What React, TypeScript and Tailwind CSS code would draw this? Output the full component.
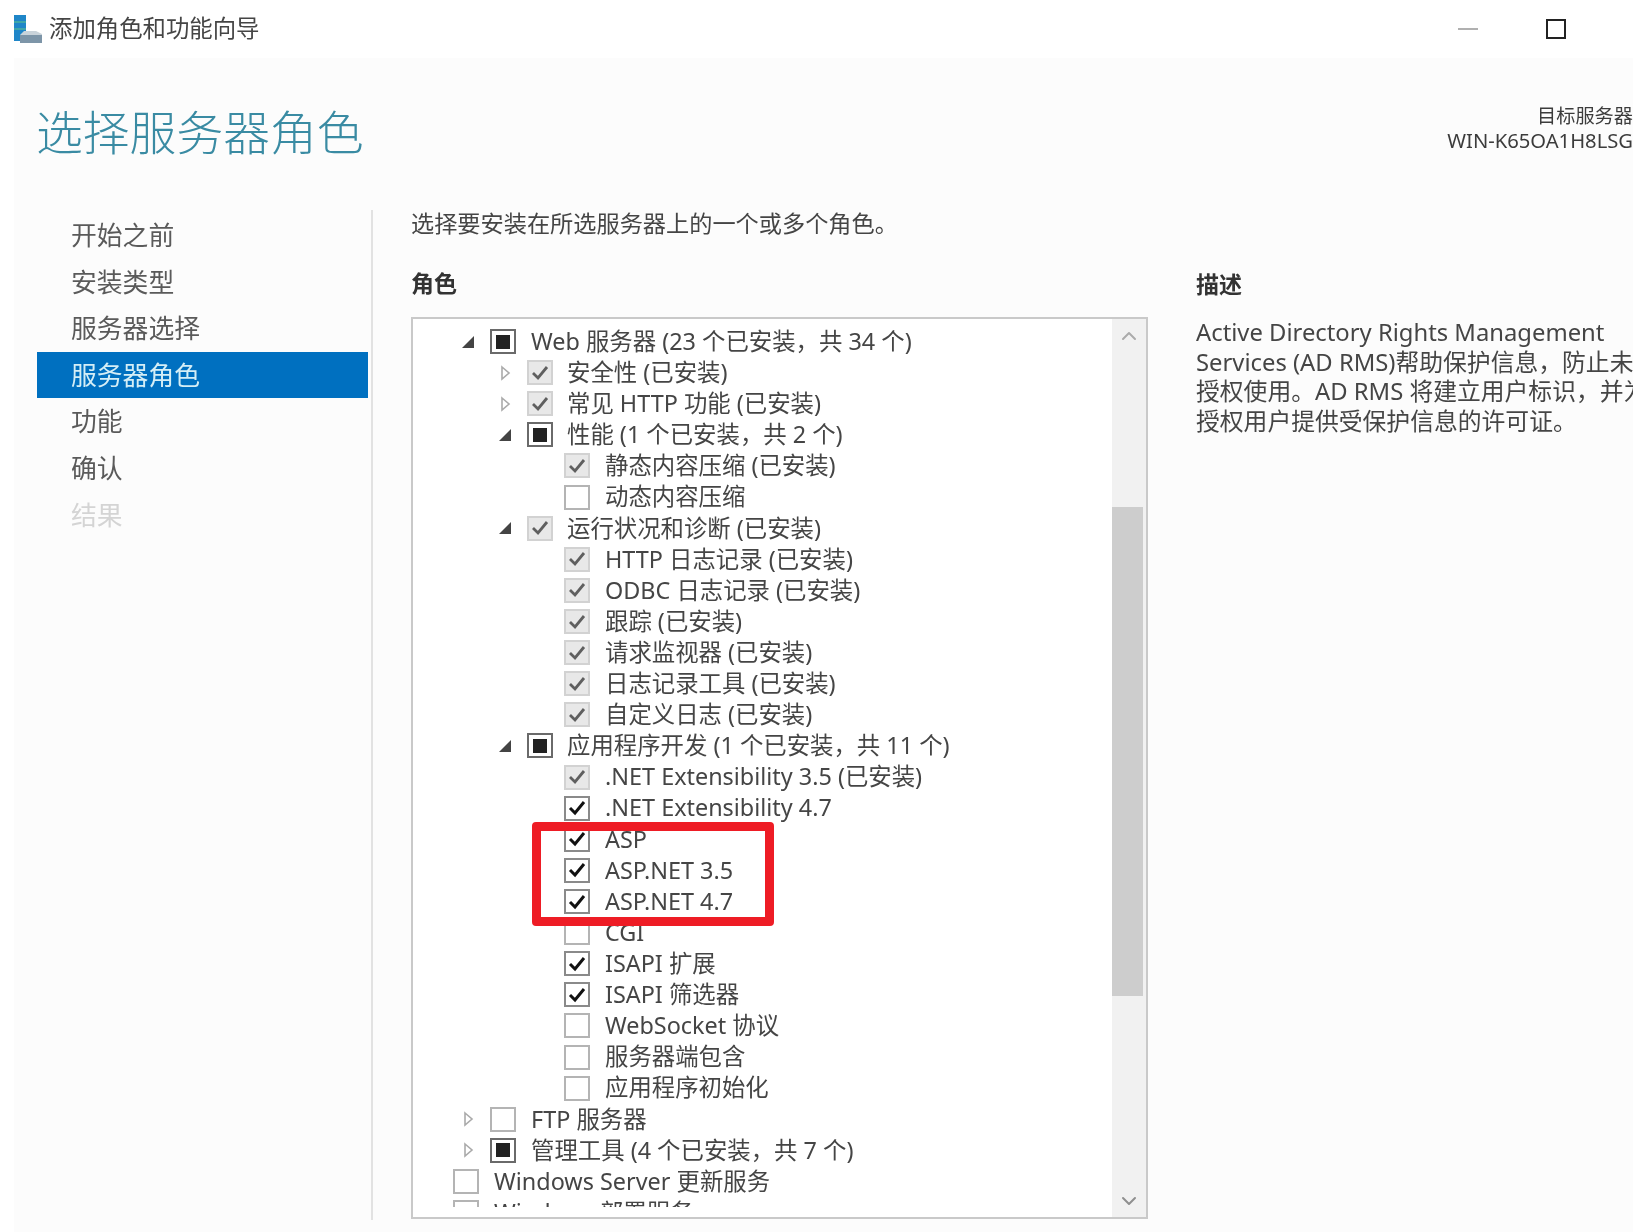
import { ChevronDown, ChevronUp } from "lucide-react";

type Check = "none" | "installed" | "mixed" | "checked";
type Arrow = "open" | "closed" | null;

interface Row {
  level: 0 | 1 | 2 | 3;
  arrow: Arrow;
  check: Check;
  label: string;
}

const steps = ["开始之前", "安装类型", "服务器选择", "服务器角色", "功能", "确认", "结果"];

const rows: Row[] = [
  { level: 1, arrow: "open", check: "mixed", label: "Web 服务器 (23 个已安装，共 34 个)" },
  { level: 2, arrow: "closed", check: "installed", label: "安全性 (已安装)" },
  { level: 2, arrow: "closed", check: "installed", label: "常见 HTTP 功能 (已安装)" },
  { level: 2, arrow: "open", check: "mixed", label: "性能 (1 个已安装，共 2 个)" },
  { level: 3, arrow: null, check: "installed", label: "静态内容压缩 (已安装)" },
  { level: 3, arrow: null, check: "none", label: "动态内容压缩" },
  { level: 2, arrow: "open", check: "installed", label: "运行状况和诊断 (已安装)" },
  { level: 3, arrow: null, check: "installed", label: "HTTP 日志记录 (已安装)" },
  { level: 3, arrow: null, check: "installed", label: "ODBC 日志记录 (已安装)" },
  { level: 3, arrow: null, check: "installed", label: "跟踪 (已安装)" },
  { level: 3, arrow: null, check: "installed", label: "请求监视器 (已安装)" },
  { level: 3, arrow: null, check: "installed", label: "日志记录工具 (已安装)" },
  { level: 3, arrow: null, check: "installed", label: "自定义日志 (已安装)" },
  { level: 2, arrow: "open", check: "mixed", label: "应用程序开发 (1 个已安装，共 11 个)" },
  { level: 3, arrow: null, check: "installed", label: ".NET Extensibility 3.5 (已安装)" },
  { level: 3, arrow: null, check: "checked", label: ".NET Extensibility 4.7" },
  { level: 3, arrow: null, check: "checked", label: "ASP" },
  { level: 3, arrow: null, check: "checked", label: "ASP.NET 3.5" },
  { level: 3, arrow: null, check: "checked", label: "ASP.NET 4.7" },
  { level: 3, arrow: null, check: "none", label: "CGI" },
  { level: 3, arrow: null, check: "checked", label: "ISAPI 扩展" },
  { level: 3, arrow: null, check: "checked", label: "ISAPI 筛选器" },
  { level: 3, arrow: null, check: "none", label: "WebSocket 协议" },
  { level: 3, arrow: null, check: "none", label: "服务器端包含" },
  { level: 3, arrow: null, check: "none", label: "应用程序初始化" },
  { level: 1, arrow: "closed", check: "none", label: "FTP 服务器" },
  { level: 1, arrow: "closed", check: "mixed", label: "管理工具 (4 个已安装，共 7 个)" },
  { level: 0, arrow: null, check: "none", label: "Windows Server 更新服务" },
  { level: 0, arrow: null, check: "none", label: "Windows 部署服务" },
];

const indent = ["w-[40px]", "w-[77px]", "w-[114px]", "w-[151px]"];
const labelGap = ["ml-[15px]", "ml-[15px]", "ml-[14px]", "ml-[15px]"];

function WizardIcon() {
  return (
    <svg width="28" height="28" viewBox="0 0 28 28" className="shrink-0">
      <rect x="0" y="0" width="12" height="26" fill="#1f86c8" />
      <rect x="0" y="6" width="12" height="2" fill="#3fa6a8" />
      <rect x="0" y="13" width="12" height="2" fill="#3fa6a8" />
      <path d="M6 26 L6 20 L10 16 L22 16 L28 19 L28 28 L6 28 Z" fill="#c9d3da" />
      <rect x="6" y="20" width="22" height="8" fill="#7d95a8" />
    </svg>
  );
}

function TreeArrow({ kind }: { kind: Arrow }) {
  if (kind === "open") {
    return (
      <svg width="14" height="14" viewBox="0 0 14 14">
        <polygon points="13,1 13,13 1,13" fill="#444" />
      </svg>
    );
  }
  if (kind === "closed") {
    return (
      <svg width="14" height="16" viewBox="0 0 14 16">
        <polygon points="4,2 11,8 4,14" fill="#fff" stroke="#aaa" strokeWidth="1.6" />
      </svg>
    );
  }
  return null;
}

function CheckBox({ state }: { state: Check }) {
  if (state === "mixed") {
    return (
      <span className="w-[26px] h-[25px] shrink-0 border-2 border-[#6a6a6a] bg-white flex items-center justify-center">
        <span className="w-[14px] h-[14px] bg-[#222]" />
      </span>
    );
  }
  if (state === "installed") {
    return (
      <span className="w-[26px] h-[25px] shrink-0 border-2 border-[#d2d2d2] bg-[#e8e8e8] flex items-center justify-center">
        <svg width="18" height="16" viewBox="0 0 18 16">
          <path d="M2 8 L7 13 L16 2" fill="none" stroke="#5f5f5f" strokeWidth="2.8" />
        </svg>
      </span>
    );
  }
  if (state === "checked") {
    return (
      <span className="w-[26px] h-[25px] shrink-0 border-2 border-[#8a8a8a] bg-white flex items-center justify-center">
        <svg width="18" height="16" viewBox="0 0 18 16">
          <path d="M2 8 L7 13 L16 2" fill="none" stroke="#111" strokeWidth="3" />
        </svg>
      </span>
    );
  }
  return <span className="w-[26px] h-[25px] shrink-0 border-2 border-[#b4b4b4] bg-white" />;
}

export default function App() {
  return (
    <div className="w-[1643px] h-[1232px] overflow-hidden bg-white text-[#454545] blur-[0.7px] font-['Noto_Sans','Noto_Sans_CJK_SC',sans-serif]">
      {/* Title bar */}
      <div className="h-[58px] flex items-center pl-[14px]">
        <WizardIcon />
        <span className="ml-[7px] text-[23.4px] leading-none">添加角色和功能向导</span>
        <div className="ml-auto flex items-center">
          <span className="w-[20px] h-[2px] bg-[#b0b0b0]" />
          <span className="ml-[68px] mr-[77px] w-[20px] h-[20px] border-[2px] border-[#222]" />
        </div>
      </div>

      <div className="relative ml-[14px] w-[1619px] h-[1174px] bg-[#fcfcfc] overflow-hidden">
        {/* Header */}
        <div className="h-[152px] flex justify-between">
          <h1 className="pl-[22px] pt-[43px] text-[46.8px] leading-[62px] font-light text-[#3a8ba3]">选择服务器角色</h1>
          <div className="pt-[46px] text-right text-[20.2px] leading-[24px] text-[#3c3c3c] whitespace-nowrap">
            <div className="text-[19.2px]">目标服务器</div>
            <div>WIN-K65OA1H8LSG</div>
          </div>
        </div>

        <div className="flex h-[1010px]">
          {/* Steps */}
          <nav className="w-[359px] shrink-0 border-r-2 border-[#e2e2e2] pt-[2px] pl-[23px] pr-[3px] text-[25.8px]">
            {steps.map((step) => (
              <div
                key={step}
                className={
                  step === "服务器角色"
                    ? "h-[46.6px] pl-[34px] flex items-center bg-[#0070c0] text-[#d4eef6]"
                    : step === "结果"
                      ? "h-[46.6px] pl-[34px] flex items-center text-[#d4d4d4]"
                      : "h-[46.6px] pl-[34px] flex items-center text-[#5a5a5a]"
                }
              >
                {step}
              </div>
            ))}
          </nav>

          {/* Roles */}
          <div className="pl-[38px] w-[776px] shrink-0">
            <p className="h-[26px] flex items-center text-[23.2px] whitespace-nowrap">选择要安装在所选服务器上的一个或多个角色。</p>
            <h2 className="mt-[33px] h-[28px] flex items-center text-[23px] font-bold text-[#333]">角色</h2>
            <div className="relative mt-[20px] w-[737px] h-[902px] border-2 border-[#c9c9c9] bg-white flex">
              <div className="flex-1 h-[888px] overflow-hidden pt-[7px]">
                {rows.map((row) => (
                  <div key={row.label} className="h-[31.12px] flex items-center">
                    <span className={`${indent[row.level]} shrink-0 flex justify-end pr-[15px]`}>
                      <TreeArrow kind={row.arrow} />
                    </span>
                    <CheckBox state={row.check} />
                    <span className={`${labelGap[row.level]} text-[23.4px] leading-none whitespace-nowrap`}>{row.label}</span>
                  </div>
                ))}
              </div>
              {/* Scrollbar */}
              <div className="w-[34px] shrink-0 bg-[#f1f1f1] flex flex-col">
                <div className="h-[188px] flex justify-center pt-[5px]">
                  <ChevronUp size={24} strokeWidth={2} className="text-[#ababab]" />
                </div>
                <div className="h-[489px] w-[31px] bg-[#cdcdcd]" />
                <div className="flex-1 flex justify-center items-end pb-[4px]">
                  <ChevronDown size={24} strokeWidth={2} className="text-[#8f8f8f]" />
                </div>
              </div>
              {/* Red highlight drawn over the list */}
              <div className="absolute left-[119px] top-[503px] w-[242px] h-[104px] border-[9px] border-[#ee1c25] rounded-[4px]" />
            </div>
          </div>

          {/* Description */}
          <div className="pl-[47px] flex-1 min-w-0">
            <h2 className="mt-[60px] h-[28px] flex items-center text-[23px] font-bold text-[#333]">描述</h2>
            <p className="mt-[20px] w-[460px] text-[23.8px] leading-[29.6px] whitespace-nowrap">
              Active Directory Rights Management
              <br />
              Services (AD RMS)帮助保护信息，防止未
              <br />
              授权使用。AD RMS 将建立用户标识，并为
              <br />
              授权用户提供受保护信息的许可证。
            </p>
          </div>
        </div>
      </div>
    </div>
  );
}
